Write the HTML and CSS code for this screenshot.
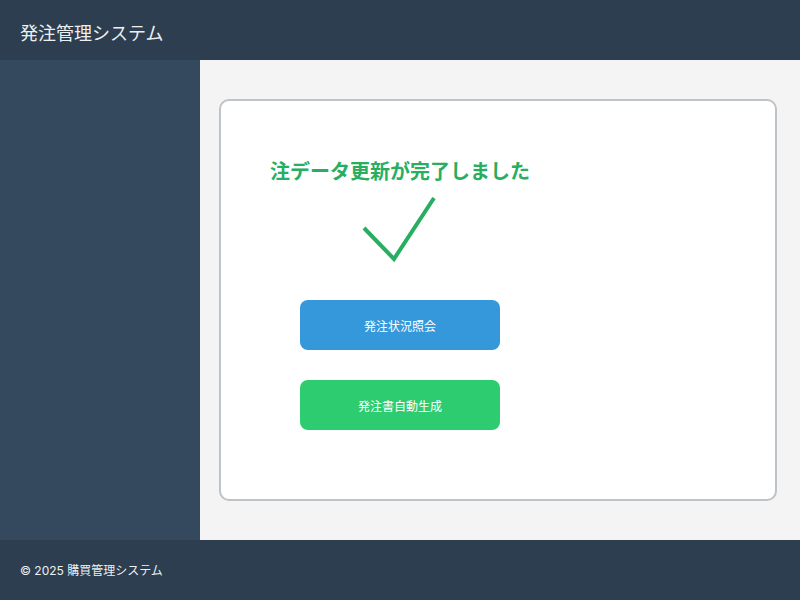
FILE: index.html
```html
<!DOCTYPE html>
<html lang="ja">
<head>
<meta charset="utf-8">
<title>発注管理システム</title>
<link rel="stylesheet" href="styles.css">
</head>
<body>
<header class="header">発注管理システム</header>
<div class="layout">
  <aside class="sidebar"></aside>
  <main class="main">
    <section class="card">
      <div class="column">
        <h2 class="title">注データ更新が完了しました</h2>
        <svg class="check" width="80" height="70" viewBox="0 0 80 70">
          <polyline points="4,34 34,65 74,4" fill="none" stroke="#27ae60" stroke-width="4"/>
        </svg>
        <div class="buttons">
          <button class="btn btn-blue">発注状況照会</button>
          <button class="btn btn-green">発注書自動生成</button>
        </div>
      </div>
    </section>
  </main>
</div>
<footer class="footer">© 2025 購買管理システム</footer>
</body>
</html>
```
FILE: styles.css
```css
* { box-sizing: border-box; }
html, body {
  margin: 0;
  padding: 0;
  width: 800px;
  height: 600px;
  overflow: hidden;
  font-family: Inter, "Noto Sans CJK JP", sans-serif;
}
.header {
  height: 60px;
  background: #2c3e50;
  color: #ecf0f1;
  font-size: 18px;
  padding-left: 20px;
  padding-top: 5px;
  line-height: 57px;
}
.layout {
  display: flex;
  height: 480px;
}
.sidebar {
  width: 200px;
  background: #34495e;
}
.main {
  flex: 1;
  background: #f4f4f4;
  padding: 39px 0 0 19px;
}
.card {
  width: 558px;
  height: 402px;
  background: #fff;
  border: 2px solid #bdc3c7;
  border-radius: 10px;
  padding: 56px 0 0 79px;
}
.column {
  width: 200px;
  display: flex;
  flex-direction: column;
  align-items: center;
}
.title {
  margin: 0;
  white-space: nowrap;
  font-size: 20px;
  line-height: 30px;
  font-weight: bold;
  color: #27ae60;
}
.check {
  display: block;
  margin-top: 7px;
}
.buttons {
  margin-top: 36px;
  display: flex;
  flex-direction: column;
  gap: 30px;
}
.btn {
  width: 200px;
  height: 50px;
  border: none;
  border-radius: 8px;
  color: #fff;
  font-family: Inter, "Noto Sans CJK JP", sans-serif;
  font-size: 12px;
  padding: 0;
}
.btn-blue { background: #3498db; }
.btn-green { background: #2ecc71; }
.footer {
  height: 60px;
  background: #2c3e50;
  color: #ecf0f1;
  font-size: 12px;
  padding-top: 1px;
  line-height: 60px;
  padding-left: 20px;
}
```
